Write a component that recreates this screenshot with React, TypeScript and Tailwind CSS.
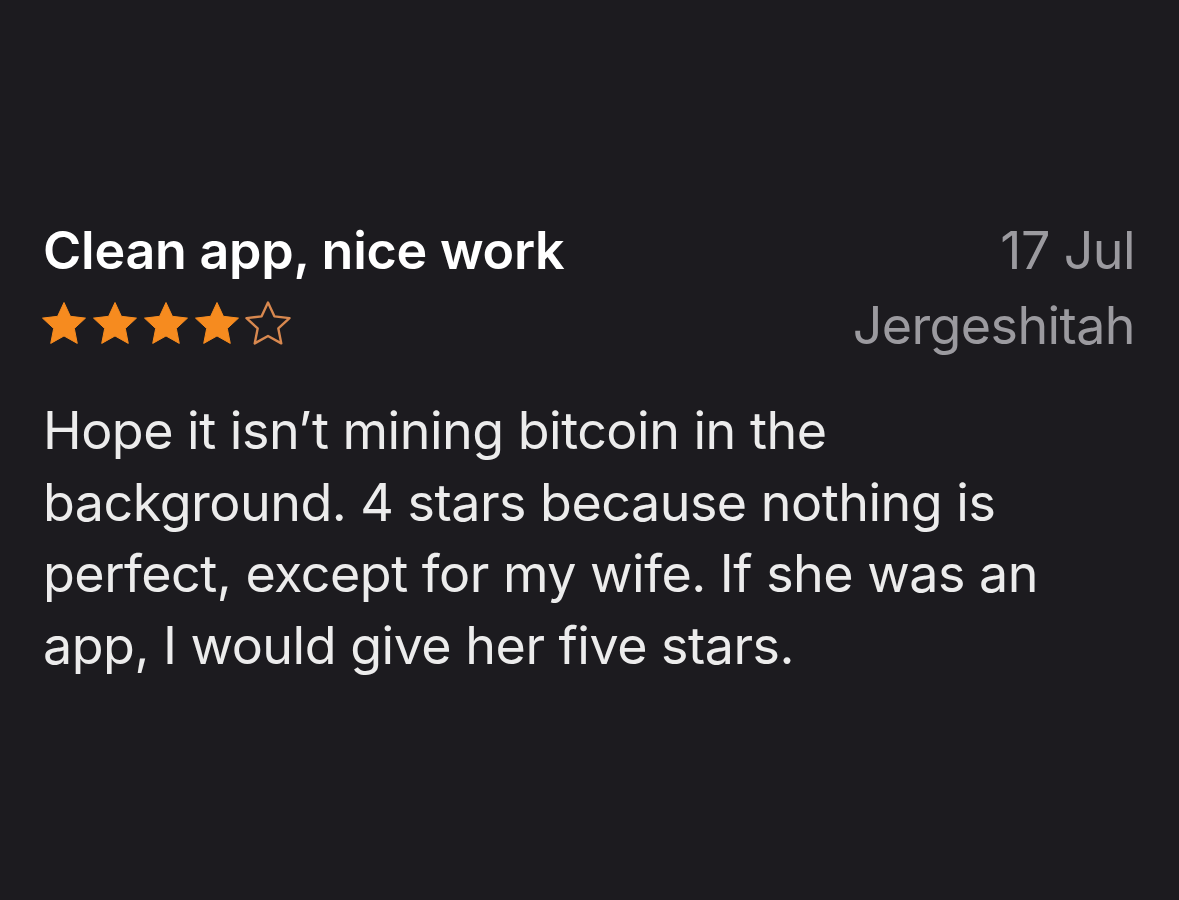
const Star = ({ filled }: { filled: boolean }) => (
  <svg viewBox="-1.5 -1.5 46 44" className="w-[46px] h-[44px]">
    <path
      d="M21.5 0L27.88 13.82L42.99 15.62L31.82 25.95L34.78 40.88L21.5 33.45L8.22 40.88L11.18 25.95L0.01 15.62L15.12 13.82Z"
      fill={filled ? "#f68b1f" : "none"}
      stroke={filled ? "#f68b1f" : "#d8884f"}
      strokeWidth={filled ? 1 : 2.4}
      strokeLinejoin="round"
    />
  </svg>
);

export default function App() {
  return (
    <div className="min-h-screen w-full bg-[#1c1b1f] font-['Inter',sans-serif] antialiased">
      <div className="px-[43px] pt-[221px]">
        <div className="flex items-start justify-between">
          <div className="flex flex-col">
            <h1 className="text-[52px] leading-[60px] font-semibold text-white tracking-[-0.25px]">
              Clean app, nice work
            </h1>
            <div className="flex gap-[5px] mt-[20px] ml-[-2px]">
              {[1, 2, 3, 4, 5].map((n) => (
                <Star key={n} filled={n <= 4} />
              ))}
            </div>
          </div>
          <div className="flex flex-col items-end text-[#9b9a9f] text-[52px] tracking-[-0.6px] mr-[1px]">
            <span className="leading-[60px]">17 Jul</span>
            <span className="leading-[60px] mt-[15px]">Jergeshitah</span>
          </div>
        </div>
        <p className="mt-[39px] w-[1005px] text-[52px] leading-[71.5px] text-[#ececec] tracking-[-0.5px]">
          Hope it isn’t mining bitcoin in the background. 4 stars because nothing is perfect,
          except for my wife. If she was an app, I would give her five stars.
        </p>
      </div>
    </div>
  );
}
